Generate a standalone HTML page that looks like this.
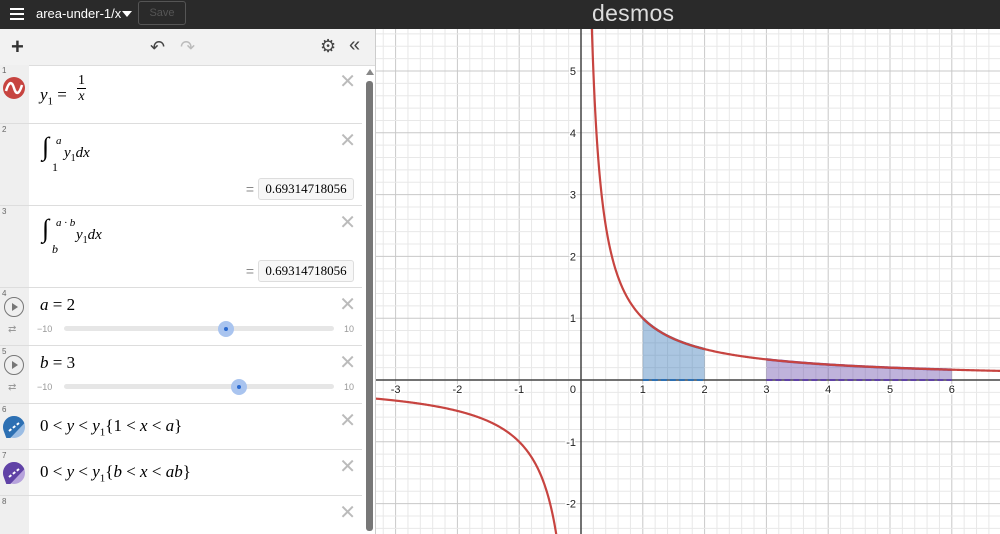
<!DOCTYPE html><html><head><meta charset="utf-8"><style>
html,body{margin:0;width:1000px;height:534px;overflow:hidden}
body{font-family:"Liberation Sans",sans-serif;background:#fff;position:relative}
.top{position:absolute;left:0;top:0;width:1000px;height:29px;background:#2a2a2a;color:#fff}
.top .ham{position:absolute;left:10px;top:8px;width:14px;height:2px;background:#fff;box-shadow:0 5px 0 #fff,0 10px 0 #fff}
.top .title{position:absolute;left:36px;top:6px;font-size:13px}
.top .tri{position:absolute;left:122px;top:11px;border:5px solid transparent;border-top:6px solid #fff}
.top .save{position:absolute;left:138px;top:1px;width:46px;height:22px;border:1px solid #555;border-radius:3px;color:#555;font-size:11px;text-align:center;line-height:22px}
.top .logo{position:absolute;left:592px;top:0px;font-size:23px;color:#ddd;letter-spacing:.3px}
.panel{position:absolute;left:0;top:29px;width:376px;height:505px;background:#fff;border-right:1px solid #ccc;box-sizing:border-box;overflow:hidden}
.tool{position:absolute;left:0;top:0;width:376px;height:36px;background:#f2f2f2;border-bottom:1px solid #ddd}
.gut{position:absolute;left:0;top:36px;width:29px;height:470px;background:#efefef}
.row{position:absolute;left:0;width:362px;border-bottom:1px solid #ddd}
.num{position:absolute;left:2px;top:1px;font-size:8px;color:#666}
.x{position:absolute;right:6px;top:4px;font-size:20px;color:#bbb;font-weight:300}
.m{position:absolute;left:40px;font-family:"Liberation Serif",serif;font-size:17px;font-style:italic;color:#000}
.m .n{font-style:normal}
.res{position:absolute;right:8px;width:94px;height:20px;border:1px solid #ddd;border-radius:3px;background:#f7f7f7;font-family:"Liberation Serif",serif;font-size:13px;line-height:20px;text-align:center}
.eq{position:absolute;right:108px;color:#888;font-size:14px}
.track{position:absolute;left:64px;width:270px;height:5px;border-radius:3px;background:#e6e6e6}
.knob{position:absolute;width:16px;height:16px;border-radius:50%;background:#a9c4ef}
.knob:after{content:"";position:absolute;left:6px;top:6px;width:4px;height:4px;border-radius:50%;background:#2a6ad0}
.lim{position:absolute;font-size:9px;color:#999}
.play{position:absolute;left:4px;width:18px;height:18px;border:1.5px solid #777;border-radius:50%}
.play:after{content:"";position:absolute;left:7px;top:5px;border:4px solid transparent;border-left:6px solid #777;border-right:0}
.scroll{position:absolute;left:366px;top:52px;width:7px;height:450px;background:#777;border-radius:3px}
</style></head><body>
<div class="top"><div class="ham"></div><div class="title">area-under-1/x</div><div class="tri"></div><div class="save">Save</div><div class="logo">desmos</div></div>
<svg id="g" style="position:absolute;left:376px;top:29px" width="624" height="505"></svg>
<div class="panel">
<div class="tool">
<div style="position:absolute;left:11px;top:10px;font-size:22px;line-height:16px;color:#333;font-weight:bold">+</div>
<div style="position:absolute;left:150px;top:8px;font-size:18px;color:#444">↶</div>
<div style="position:absolute;left:180px;top:8px;font-size:18px;color:#bbb">↷</div>
<div style="position:absolute;left:320px;top:7px;font-size:18px;color:#444">⚙</div>
<div style="position:absolute;left:349px;top:5px;font-size:20px;color:#444">«</div>
</div>
<div class="gut"></div>
<div class="row" style="top:36px;height:58px"><span class="num">1</span>
<svg style="position:absolute;left:3px;top:12px" width="22" height="22"><circle cx="11" cy="11" r="11" fill="#c74440"/><path d="M3 14 C6 4,9 4,11 11 C13 18,16 18,19 8" stroke="#fff" stroke-width="2.5" fill="none"/></svg>
<span class="x">✕</span>
<div class="m" style="top:20px">y<sub style="font-size:11px" class="n">1</sub> <span class="n">=</span></div>
<div class="m" style="left:77px;top:8px;font-size:14px;text-align:center;line-height:15px"><span class="n">1</span><br><span style="border-top:1px solid #000;display:inline-block;width:9px">x</span></div>
</div>
<div class="row" style="top:95px;height:81px"><span class="num">2</span><span class="x">✕</span>
<div class="m" style="top:8px;font-size:26px;left:42px">∫</div><div class="m" style="left:56px;top:11px;font-size:11px">a</div><div class="m" style="left:52px;top:36px;font-size:12px"><span class="n">1</span></div>
<div class="m" style="left:64px;top:21px;font-size:15px">y<sub style="font-size:10px" class="n">1</sub>dx</div>
<span class="eq" style="top:57px">=</span><div class="res" style="top:54px">0.69314718056</div></div>
<div class="row" style="top:177px;height:81px"><span class="num">3</span><span class="x">✕</span>
<div class="m" style="top:8px;font-size:26px;left:42px">∫</div><div class="m" style="left:56px;top:11px;font-size:11px">a · b</div><div class="m" style="left:52px;top:36px;font-size:12px">b</div>
<div class="m" style="left:76px;top:21px;font-size:15px">y<sub style="font-size:10px" class="n">1</sub>dx</div>
<span class="eq" style="top:57px">=</span><div class="res" style="top:54px">0.69314718056</div></div>
<div class="row" style="top:259px;height:57px"><span class="num">4</span><div class="play" style="top:9px"></div><span style="position:absolute;left:8px;top:36px;font-size:10px;color:#999">⇄</span><span class="x">✕</span>
<div class="m" style="top:7px">a <span class="n">= 2</span></div><span class="lim" style="left:37px;top:36px">−10</span><div class="track" style="top:38px"></div><div class="knob" style="left:218px;top:33px"></div><span class="lim" style="left:344px;top:36px">10</span></div>
<div class="row" style="top:317px;height:57px"><span class="num">5</span><div class="play" style="top:9px"></div><span style="position:absolute;left:8px;top:36px;font-size:10px;color:#999">⇄</span><span class="x">✕</span>
<div class="m" style="top:7px">b <span class="n">= 3</span></div><span class="lim" style="left:37px;top:36px">−10</span><div class="track" style="top:38px"></div><div class="knob" style="left:231px;top:33px"></div><span class="lim" style="left:344px;top:36px">10</span></div>
<div class="row" style="top:375px;height:45px"><span class="num">6</span>
<svg style="position:absolute;left:3px;top:12px" width="22" height="22"><circle cx="11" cy="11" r="11" fill="#9bbde4"/><path d="M0 11A11 11 0 0 1 22 11 L0 22Z" fill="#2d70b3" transform="rotate(-20 11 11)"/><path d="M6 15 L16 7" stroke="#fff" stroke-width="2" stroke-dasharray="3 2"/></svg>
<span class="x">✕</span><div class="m" style="top:12px"><span class="n">0 &lt; </span>y<span class="n"> &lt; </span>y<sub style="font-size:11px" class="n">1</sub><span class="n">{1 &lt; </span>x<span class="n"> &lt; </span>a<span class="n">}</span></div></div>
<div class="row" style="top:421px;height:45px"><span class="num">7</span>
<svg style="position:absolute;left:3px;top:12px" width="22" height="22"><circle cx="11" cy="11" r="11" fill="#b7a3dc"/><path d="M0 11A11 11 0 0 1 22 11 L0 22Z" fill="#6042a6" transform="rotate(-20 11 11)"/><path d="M6 15 L16 7" stroke="#fff" stroke-width="2" stroke-dasharray="3 2"/></svg>
<span class="x">✕</span><div class="m" style="top:12px"><span class="n">0 &lt; </span>y<span class="n"> &lt; </span>y<sub style="font-size:11px" class="n">1</sub><span class="n">{</span>b<span class="n"> &lt; </span>x<span class="n"> &lt; </span>ab<span class="n">}</span></div></div>
<div class="row" style="top:467px;height:37px;border:0"><span class="num">8</span><span class="x">✕</span></div>
<div style="position:absolute;left:366px;top:40px;border:4px solid transparent;border-bottom:6px solid #888;border-top:0"></div>
<div class="scroll"></div>
</div>
<script>
var s=document.getElementById('g'),ox=205,oy=351,u=61.8,h='';
function X(x){return ox+x*u}function Y(y){return oy-y*u}
for(var i=-20;i<=40;i++){var x=X(i/5);if(x<0||x>624)continue;h+='<line x1="'+x+'" y1="0" x2="'+x+'" y2="505" stroke="'+(i%5?'#e8e8e8':'#c8c8c8')+'"/>';}
for(var i=-30;i<=35;i++){var y=Y(i/5);if(y<0||y>505)continue;h+='<line x1="0" y1="'+y+'" x2="624" y2="'+y+'" stroke="'+(i%5?'#e8e8e8':'#c8c8c8')+'"/>';}
h+='<line x1="'+ox+'" y1="0" x2="'+ox+'" y2="505" stroke="#444" stroke-width="1.5"/><line x1="0" y1="'+oy+'" x2="624" y2="'+oy+'" stroke="#444" stroke-width="1.5"/>';
function area(a,b,c,fc){var p='M'+X(a)+' '+oy;for(var x=a;x<=b+1e-9;x+=0.02)p+=' L'+X(x)+' '+Y(1/x);p+=' L'+X(b)+' '+oy+'Z';
h+='<path d="'+p+'" fill="'+fc+'" fill-opacity="0.4" stroke="none"/><line x1="'+X(a)+'" y1="'+oy+'" x2="'+X(b)+'" y2="'+oy+'" stroke="'+c+'" stroke-width="2" stroke-dasharray="6 3"/>';
var q='M'+X(a)+' '+Y(1/a);for(var x=a;x<=b+1e-9;x+=0.02)q+=' L'+X(x)+' '+Y(1/x);h+='<path d="'+q+'" stroke="'+c+'" stroke-width="2.5" fill="none"/>';}
area(1,2,'#2d70b3','#2d70b3');area(3,6,'#6042a6','#6042a6');
var p='';for(var x=0.1;x<=7;x+=0.01)p+=(p?' L':'M')+X(x)+' '+Y(1/x);
var n='';for(var x=-3.4;x<=-0.05;x+=0.01)n+=(n?' L':'M')+X(x)+' '+Y(1/x);
h+='<path d="'+p+'" stroke="#c74440" stroke-width="2.2" fill="none"/><path d="'+n+'" stroke="#c74440" stroke-width="2.2" fill="none"/>';
function t(x,y,s,a){h+='<text x="'+x+'" y="'+y+'" font-size="11" text-anchor="'+a+'" fill="#222" stroke="#fff" stroke-width="3" paint-order="stroke" font-family="Liberation Sans">'+s+'</text>';}
for(var i=-3;i<=6;i++){if(i)t(X(i),oy+13,i<0?'-'+(-i):i,'middle');}
t(ox-5,oy+13,'0','end');
for(var i=-2;i<=5;i++){if(i)t(ox-5,Y(i)+4,i<0?'-'+(-i):i,'end');}
s.innerHTML=h;
</script>
</body></html>
